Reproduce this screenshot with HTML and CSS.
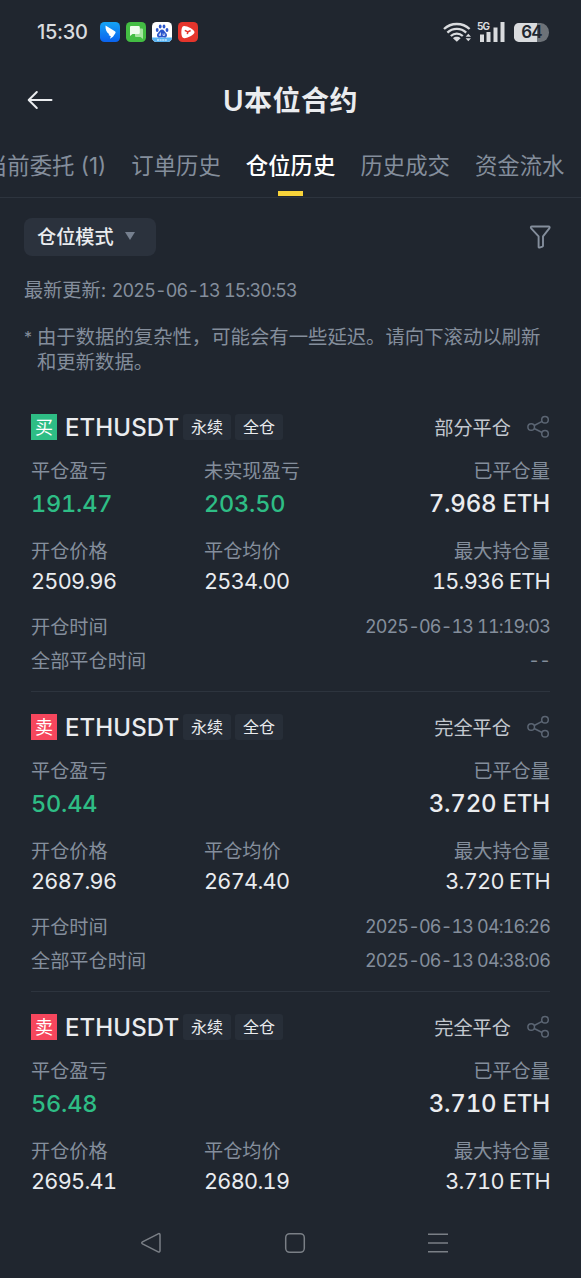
FILE: index.html
```html
<!DOCTYPE html>
<html lang="zh-CN">
<head>
    <meta charset="UTF-8">
    <title>U本位合约</title>
    <meta name="viewport" content="width=device-width, initial-scale=1.0">
    <link rel="stylesheet" href="styles.css">
</head>
<body>
    <!-- shared icons -->
    <svg width="0" height="0" class="sprite">
        <symbol id="share" viewBox="0 0 24 24">
            <g fill="none" stroke="currentColor" stroke-width="1.5">
                <circle cx="5.2" cy="12" r="3.3"/>
                <circle cx="19" cy="4.800" r="3.3"/>
                <circle cx="19" cy="18.800" r="3.3"/>
                <path d="M8.2 10.500l7.9-4.2M8.2 13.500l7.9 4"/>
            </g>
        </symbol>
    </svg>

    <div class="screen">
        <div class="status-bar">
            <span class="clock">15:30</span>
            <div class="apps">
                <svg width="20" height="20" viewBox="0 0 20 20">
                    <defs><linearGradient id="blue" x1="0" y1="0" x2="0" y2="1"><stop offset="0" stop-color="#15a4f5"/><stop offset="1" stop-color="#0a62ee"/></linearGradient></defs>
                    <rect width="20" height="20" rx="4.5" fill="url(#blue)"/>
                    <path d="M5.500 3.500l7 4.200 2.700 1.800c.6.500.5 1 .1 1.700l-2.300 3.600-3 2 .8-2.600-2.300-1.200.8-.7C6.500 10.500 5.300 7.500 5.500 3.500z" fill="#fff"/>
                </svg>
                <svg width="20" height="20" viewBox="0 0 20 20">
                    <rect width="20" height="20" rx="4.5" fill="#43bd43"/>
                    <path d="M9 6.500h7a1 1 0 0 1 1 1V17l-2.500-2H10a1 1 0 0 1-1-1z" fill="#a5e3a1"/>
                    <path d="M5 4h7.500a1.300 1.300 0 0 1 1.300 1.300v5.400a1.300 1.300 0 0 1-1.300 1.300H6.500L4 14V5a1 1 0 0 1 1-1z" fill="#effbee"/>
                </svg>
                <svg width="20" height="20" viewBox="0 0 20 20">
                    <rect width="20" height="20" rx="4.5" fill="#fff"/>
                    <path d="M0 15.500h20a4.500 4.500 0 0 1-4.500 4.500h-11A4.500 4.500 0 0 1 0 15.500z" fill="#58b3f2"/>
                    <g fill="#2a55cc">
                        <ellipse cx="5.2" cy="8" rx="1.4" ry="1.9"/>
                        <ellipse cx="8.2" cy="4.500" rx="1.4" ry="1.9"/>
                        <ellipse cx="12" cy="4.500" rx="1.4" ry="1.9"/>
                        <ellipse cx="15" cy="8" rx="1.4" ry="1.9"/>
                        <path d="M10 7.500c2 0 2.500 2 3.800 3.200 2.200 2 1.200 5.300-1.500 4.800-1.500-.3-3-.3-4.600 0-2.700.5-3.700-2.800-1.500-4.800C7.500 9.500 8 7.500 10 7.500z"/>
                    </g>
                    <path d="M8.500 10.500v3M8.500 13.500H7.300v-1.500h1.200M11 11.500v2h1.700v-2" stroke="#fff" stroke-width=".7" fill="none"/>
                    <path d="M5 18h10" stroke="#fff" stroke-width="1.2" stroke-dasharray="2 .6"/>
                </svg>
                <svg width="20" height="20" viewBox="0 0 20 20">
                    <rect width="20" height="20" rx="4.5" fill="#e5352c"/>
                    <path d="M4.500 4.800c1.500-2.500 11.500 2.500 12 5.200.3 2.800-9 7.500-11.500 5.800-2.200-1.500-2-9-.5-11z" fill="#fff"/>
                    <path d="M6.800 8.300l3 1.700 2.800-1.500M9.800 10l-.5 2.200" stroke="#e5352c" stroke-width="1.500" fill="none"/>
                </svg>
            </div>
            <div class="signals">
                <svg width="29" height="22" viewBox="0 0 29 22">
                    <g fill="none" stroke="#d9dbde" stroke-width="2.300">
                        <path d="M1 8c7-6.700 18.600-6.700 25.600 0"/>
                        <path d="M4.400 11.600c5.300-5 13.500-5 18.800 0"/>
                        <path d="M7.800 15c3.500-3.200 8.500-3.200 12 0"/>
                    </g>
                    <path d="M10 17.200c2-1.900 5.600-1.900 7.600 0L13.800 20.700z" fill="#d9dbde"/>
                    <path d="M25.300 12.800l2.700 3h-5.400zM25.300 20.300l2.700-3h-5.400z" fill="#d9dbde"/>
                </svg>
                <div class="cell">
                    <span class="net">5G</span>
                    <svg width="26" height="20" viewBox="0 0 26 20">
                        <path d="M1 12.500h4V20H1zM7.500 10h4v10h-4zM14.500 5.500h4V20h-4zM21.500 0h4v20h-4z" fill="#d9dbde"/>
                    </svg>
                </div>
                <div class="battery"><span>64</span></div>
            </div>
        </div>

        <div class="header">
            <svg class="back" width="26" height="20" viewBox="0 0 26 20">
                <path d="M24.500 10H2M9.800 2L1.700 10l8.100 8" fill="none" stroke="#eaecef" stroke-width="2" stroke-linecap="round" stroke-linejoin="round"/>
            </svg>
            <h1>U本位合约</h1>
        </div>

        <div class="tabs">
            <span class="tab">当前委托 (1)</span>
            <span class="tab">订单历史</span>
            <span class="tab active">仓位历史</span>
            <span class="tab">历史成交</span>
            <span class="tab">资金流水</span>
        </div>

        <div class="toolbar">
            <div class="mode">仓位模式 <i class="caret"></i></div>
            <svg width="22" height="24" viewBox="0 0 22 24">
                <path d="M3 1.500h16.500c1.200 0 1.500 1 .8 1.900L14 11.300v9.500c0 .4-.2.700-.6.900l-2.800.9c-.6.200-1-.1-1-.7V11.300L2.200 3.400c-.7-.9-.4-1.900.8-1.900z" fill="none" stroke="#848e9c" stroke-width="1.900" stroke-linejoin="round"/>
            </svg>
        </div>

        <p class="updated">最新更新: <span class="date">2025-06-13 15:30:53</span></p>
        <div class="note">
            <span class="star">*</span>
            <p>由于数据的复杂性，可能会有一些延迟。请向下滚动以刷新<br>和更新数据。</p>
        </div>

        <div class="list">
            <div class="position">
                <div class="top">
                    <span class="side buy">买</span>
                    <span class="symbol">ETHUSDT</span>
                    <span class="tag">永续</span>
                    <span class="tag">全仓</span>
                    <span class="state">部分平仓</span>
                    <svg class="share" width="24" height="24"><use href="#share"/></svg>
                </div>
                <div class="grid main">
                    <div><label>平仓盈亏</label><b class="up">191.47</b></div>
                    <div><label>未实现盈亏</label><b class="up">203.50</b></div>
                    <div><label>已平仓量</label><b>7.968 ETH</b></div>
                </div>
                <div class="grid">
                    <div><label>开仓价格</label><b>2509.96</b></div>
                    <div><label>平仓均价</label><b>2534.00</b></div>
                    <div><label>最大持仓量</label><b>15.936 ETH</b></div>
                </div>
                <div class="times">
                    <div class="time"><span>开仓时间</span><span class="date">2025-06-13 11:19:03</span></div>
                    <div class="time"><span>全部平仓时间</span><span class="date">--</span></div>
                </div>
            </div>

            <div class="position">
                <div class="top">
                    <span class="side sell">卖</span>
                    <span class="symbol">ETHUSDT</span>
                    <span class="tag">永续</span>
                    <span class="tag">全仓</span>
                    <span class="state">完全平仓</span>
                    <svg class="share" width="24" height="24"><use href="#share"/></svg>
                </div>
                <div class="grid main">
                    <div><label>平仓盈亏</label><b class="up">50.44</b></div>
                    <div></div>
                    <div><label>已平仓量</label><b>3.720 ETH</b></div>
                </div>
                <div class="grid">
                    <div><label>开仓价格</label><b>2687.96</b></div>
                    <div><label>平仓均价</label><b>2674.40</b></div>
                    <div><label>最大持仓量</label><b>3.720 ETH</b></div>
                </div>
                <div class="times">
                    <div class="time"><span>开仓时间</span><span class="date">2025-06-13 04:16:26</span></div>
                    <div class="time"><span>全部平仓时间</span><span class="date">2025-06-13 04:38:06</span></div>
                </div>
            </div>

            <div class="position">
                <div class="top">
                    <span class="side sell">卖</span>
                    <span class="symbol">ETHUSDT</span>
                    <span class="tag">永续</span>
                    <span class="tag">全仓</span>
                    <span class="state">完全平仓</span>
                    <svg class="share" width="24" height="24"><use href="#share"/></svg>
                </div>
                <div class="grid main">
                    <div><label>平仓盈亏</label><b class="up">56.48</b></div>
                    <div></div>
                    <div><label>已平仓量</label><b>3.710 ETH</b></div>
                </div>
                <div class="grid">
                    <div><label>开仓价格</label><b>2695.41</b></div>
                    <div><label>平仓均价</label><b>2680.19</b></div>
                    <div><label>最大持仓量</label><b>3.710 ETH</b></div>
                </div>
            </div>
        </div>

        <div class="nav">
            <svg width="22" height="22" viewBox="0 0 22 22"><path d="M18.200 1.800L2.500 9.800c-1 .6-1 1.400 0 2l15.700 8c1 .5 1.800 0 1.800-1V2.800c0-1-.8-1.500-1.800-1z"/></svg>
            <svg width="22" height="22" viewBox="0 0 22 22"><rect x="1.700" y="1.700" width="18.600" height="18.600" rx="4"/></svg>
            <svg width="22" height="22" viewBox="0 0 22 22"><path d="M1 2.200h20M1 11h20M1 19.800h20"/></svg>
        </div>
    </div>
</body>
</html>
```
FILE: styles.css
```css
* {
    box-sizing: border-box;
}

body {
    margin: 0;
    background: #20262f;
    color: #eaecef;
    font-family: Inter, "Noto Sans CJK SC", sans-serif;
    font-size: 19.2px;
}

h1, p {
    margin: 0;
}

svg {
    display: block;
    flex-shrink: 0;
}

.sprite {
    position: absolute;
}

.screen {
    height: 1278px;
    display: flex;
    flex-direction: column;
    overflow: hidden;
}

/* Status bar */
.status-bar {
    height: 64px;
    display: flex;
    align-items: center;
    padding: 0 32px 0 37px;
    flex-shrink: 0;
}

.clock {
    width: 63px;
    font-size: 20px;
    font-weight: 500;
    color: #d9dbde;
    letter-spacing: -0.3px;
}

.apps {
    display: flex;
    gap: 6px;
}

.signals {
    display: flex;
    align-items: center;
    margin-left: auto;
}

.cell {
    position: relative;
    margin: 0 9px 0 7px;
}

.net {
    position: absolute;
    left: -2px;
    top: -1px;
    font-size: 10px;
    line-height: 10px;
    font-weight: 700;
    letter-spacing: -0.8px;
    color: #d9dbde;
}

.battery {
    width: 35px;
    height: 19px;
    border-radius: 5px 9px 9px 5px / 5px 10px 10px 5px;
    background: linear-gradient(90deg, #d9dbde 23px, #6d7278 23px);
    color: #20262f;
    font-size: 17px;
    line-height: 19px;
    font-weight: 600;
    text-align: center;
    letter-spacing: -0.8px;
}

/* Header */
.header {
    height: 72px;
    position: relative;
    display: flex;
    align-items: center;
    justify-content: center;
    flex-shrink: 0;
}

.back {
    position: absolute;
    left: 27px;
}

h1 {
    padding-top: 1px;
    font-size: 28px;
    line-height: 40px;
    font-weight: 600;
    letter-spacing: 0.5px;
}

.tabs {
    height: 62px;
    display: flex;
    justify-content: flex-end;
    gap: 25px;
    padding-right: 16.5px;
    border-bottom: 1px solid #2d343e;
    flex-shrink: 0;
}

.tab {
    position: relative;
    flex-shrink: 0;
    font-size: 22.4px;
    line-height: 60px;
    color: #848e9c;
    white-space: nowrap;
}

.tab.active {
    color: #fff;
    font-weight: 500;
}

.tab.active::after {
    content: "";
    position: absolute;
    left: 50%;
    bottom: 1px;
    width: 25px;
    height: 5px;
    margin-left: -12.5px;
    background: #f8d33a;
}

.toolbar {
    display: flex;
    justify-content: space-between;
    align-items: center;
    padding: 20px 30px 0 24px;
}

.mode {
    width: 132px;
    height: 38px;
    display: flex;
    align-items: center;
    gap: 11.5px;
    padding: 0 0 2px 13px;
    border-radius: 8px;
    background: #2b323d;
    font-weight: 500;
}

.caret {
    border: 5.5px solid transparent;
    border-top: 8px solid #76808f;
    border-bottom: 0;
}

.updated {
    margin: 19px 0 0 24px;
    line-height: 30px;
    color: #848e9c;
}

.note {
    display: flex;
    margin: 19px 0 0 24px;
    font-size: 19.38px;
    line-height: 25px;
    color: #848e9c;
}

.star {
    width: 13px;
    font-size: 16px;
}

.date {
    font-size: 18px;
    color: #848e9c;
    font-variant-numeric: tabular-nums;
    letter-spacing: -0.85px;
}

/* Position list */
.list {
    flex: 1;
    min-height: 0;
    margin-top: 17px;
    padding: 0 31px;
    overflow: hidden;
}

.position {
    height: 300px;
    padding-top: 17px;
    border-bottom: 1px solid #2d343e;
}

.position:last-child {
    border-bottom: 0;
}

.top {
    display: flex;
    align-items: center;
    height: 36px;
    margin-bottom: 11px;
}

.side {
    width: 26px;
    height: 26px;
    margin-right: 8px;
    font-size: 18px;
    line-height: 28px;
    text-align: center;
    color: #fff;
}

.buy {
    background: #2ebd85;
}

.sell {
    background: #f6465d;
}

.symbol {
    width: 118px;
    font-size: 24px;
    font-weight: 500;
    letter-spacing: 0.1px;
}

.tag {
    width: 48px;
    height: 26px;
    margin-right: 4px;
    border-radius: 3px;
    background: #272e38;
    font-size: 16px;
    line-height: 26px;
    text-align: center;
}

.state {
    margin-left: auto;
    color: #c3c8cf;
}

.share {
    margin-left: 15px;
    color: #5b6573;
}

.grid {
    display: grid;
    grid-template-columns: 173px 1fr auto;
    margin-bottom: 14px;
}

.grid > div:last-child {
    text-align: right;
}

.grid label {
    display: block;
    line-height: 30px;
    color: #848e9c;
}

.grid b {
    display: block;
    font-size: 21.7px;
    font-weight: 400;
    line-height: 30px;
    font-variant-numeric: tabular-nums;
    letter-spacing: -0.7px;
}

.main {
    margin-bottom: 15px;
}

.main b {
    font-size: 24px;
    font-weight: 500;
    line-height: 35px;
    letter-spacing: -0.2px;
}

.main .up {
    font-size: 23.5px;
    color: #2ebd85;
}

.time {
    display: flex;
    justify-content: space-between;
    line-height: 34px;
    color: #848e9c;
}

/* System navigation */
.nav {
    height: 71px;
    display: flex;
    justify-content: space-between;
    align-items: center;
    padding: 0 132px 0 140px;
    flex-shrink: 0;
}

.nav svg {
    fill: none;
    stroke: #7a7f86;
    stroke-width: 1.5;
}
```
